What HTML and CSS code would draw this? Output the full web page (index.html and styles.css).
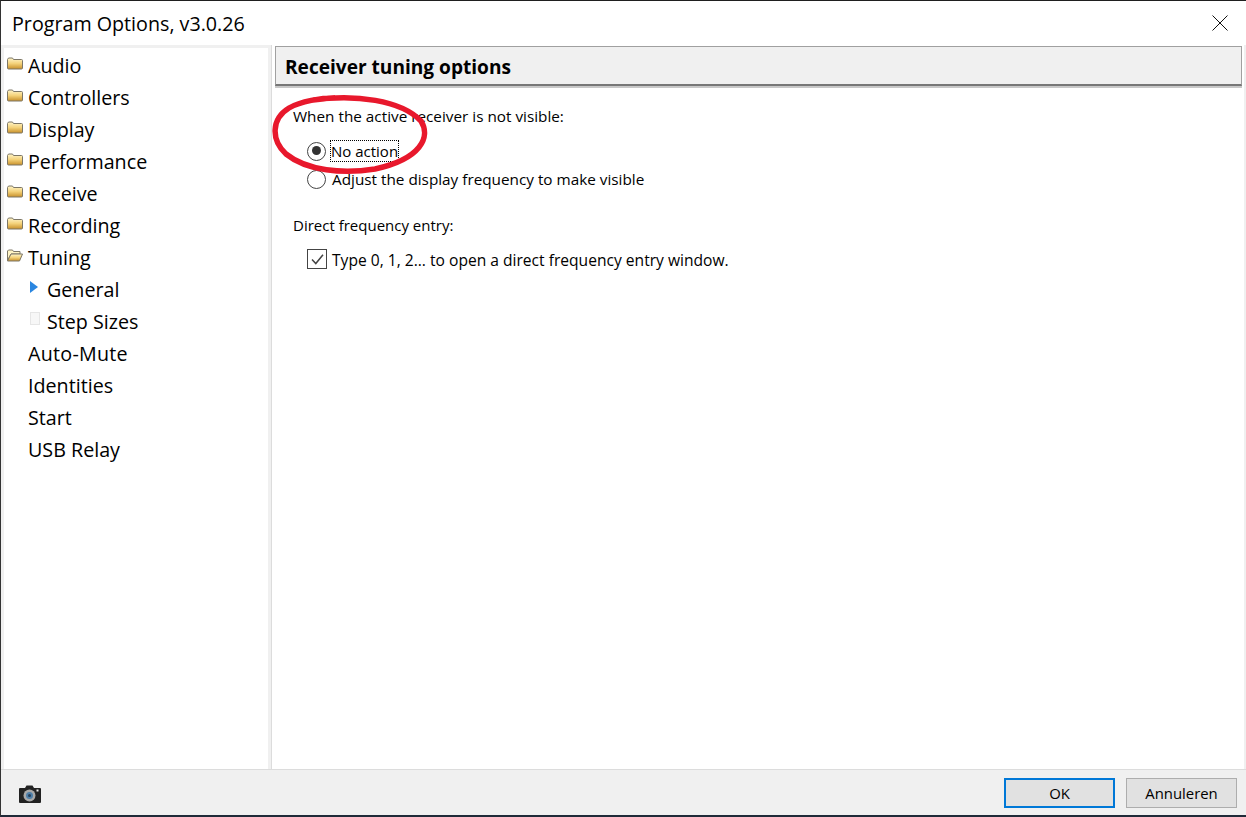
FILE: index.html
```html
<!DOCTYPE html>
<html lang="en">
<head>
<meta charset="utf-8">
<title>Program Options</title>
<link rel="stylesheet" href="styles.css">
</head>
<body>
<svg width="0" height="0" class="defs">
  <defs>
    <linearGradient id="fold" x1="0" y1="0" x2="0" y2="1">
      <stop offset="0" stop-color="#fff6cc"/>
      <stop offset="0.5" stop-color="#f4d27a"/>
      <stop offset="1" stop-color="#c8902a"/>
    </linearGradient>
    <symbol id="folder" viewBox="0 0 16 13">
      <path d="M.5 2.5 L1.5 1 H5.5 L6.5 2.5 H14.5 Q15.5 2.5 15.5 3.5 V11 Q15.5 12 14.5 12 H1.5 Q.5 12 .5 11 Z" fill="url(#fold)" stroke="#7d7766"/>
    </symbol>
  </defs>
</svg>
<div class="window">
  <header class="titlebar">
    <span class="title">Program Options, v3.0.26</span>
    <svg class="close" width="16" height="16" viewBox="0 0 16 16"><path d="M.5.5 15.5 15.5M15.5.5.5 15.5" stroke="#111" fill="none"/></svg>
  </header>
  <div class="main">
    <nav class="tree">
      <div class="node"><svg class="ficon"><use href="#folder"/></svg>Audio</div>
      <div class="node"><svg class="ficon"><use href="#folder"/></svg>Controllers</div>
      <div class="node"><svg class="ficon"><use href="#folder"/></svg>Display</div>
      <div class="node"><svg class="ficon"><use href="#folder"/></svg>Performance</div>
      <div class="node"><svg class="ficon"><use href="#folder"/></svg>Receive</div>
      <div class="node"><svg class="ficon"><use href="#folder"/></svg>Recording</div>
      <div class="node"><svg class="ficon" viewBox="0 0 16 13"><path d="M.5 11.5 V2 L1.5 1 H5.5 L6.5 2.5 H13 V5 H4 L.5 11.5 Z" fill="#fff4c4" stroke="#7d7766"/><path d="M.5 12 L4 5 H15.5 L12.5 12 Z" fill="url(#fold)" stroke="#7d7766"/></svg>Tuning</div>
      <div class="node child"><span class="mark"><svg width="8" height="12" viewBox="0 0 8 12"><path d="M0 0 8 6 0 12Z" fill="#2a86e0"/></svg></span>General</div>
      <div class="node child"><span class="mark"><span class="blank"></span></span>Step Sizes</div>
      <div class="node plain wide">Auto-Mute</div>
      <div class="node plain">Identities</div>
      <div class="node plain">Start</div>
      <div class="node plain">USB Relay</div>
    </nav>
    <section class="pane">
      <h1 class="pane-title">Receiver tuning options</h1>
      <div class="pane-body">
        <p class="label">When the active receiver is not visible:</p>
        <div class="opts">
          <div class="opt first"><span class="radio on"></span><span class="focus">No action</span></div>
          <div class="opt"><span class="radio"></span><span class="txt">Adjust the display frequency to make visible</span></div>
        </div>
        <p class="label second">Direct frequency entry:</p>
        <div class="opt check-row"><span class="check"><svg width="15" height="15" viewBox="0 0 15 15"><path d="M2 7.5 5.8 11.5 13 2.8" fill="none" stroke="#444" stroke-width="1.5"/></svg></span><span class="txt typed">Type 0, 1, 2... to open a direct frequency entry window.</span></div>
      </div>
      <svg class="ring" width="160" height="84" viewBox="0 0 160 84"><path d="M42 7 C84 1 130 7 150 28 C160 44 150 66 104 76 C72 81 36 78 15 61 C0 47 0 26 18 15 C30 8 50 5 64 5" fill="none" stroke="#e8182c" stroke-width="5.5"/></svg>
    </section>
  </div>
  <footer class="footer">
    <svg class="camera" width="24" height="20" viewBox="0 0 24 20">
      <path d="M1 5 Q1 4 2 4 H7 L8.5 1.5 H14.5 L16 4 H22 Q23 4 23 5 V18 Q23 19 22 19 H2 Q1 19 1 18 Z" fill="#222"/>
      <circle cx="11.5" cy="11.5" r="6" fill="#a8a8a8"/>
      <circle cx="11.5" cy="11.5" r="3.5" fill="#4f7fa8"/>
      <circle cx="11.5" cy="11.5" r="1.5" fill="#26405c"/>
      <rect x="18.5" y="5.5" width="2" height="2" fill="#eee"/>
    </svg>
    <div class="buttons">
      <button class="btn default">OK</button>
      <button class="btn">Annuleren</button>
    </div>
  </footer>
</div>
</body>
</html>
```
FILE: styles.css
```css
* { box-sizing: border-box; }
html, body { margin: 0; padding: 0; }
body {
  width: 1246px;
  height: 817px;
  overflow: hidden;
  font-family: "Open Sans", "Noto Sans", sans-serif;
  color: #000;
  background: #fff;
}
.defs { position: absolute; }
.window {
  width: 1246px;
  height: 817px;
  display: flex;
  flex-direction: column;
  border-top: 1px solid #1f1f1f;
  border-left: 1px solid #333;
  border-bottom: 2px solid #1f2a38;
  background: #f0f0f0;
}
.titlebar {
  height: 44px;
  flex: none;
  background: #fff;
  display: flex;
  align-items: center;
  justify-content: space-between;
  padding: 0 18px 0 11px;
}
.title { font-size: 19.7px; }
.close { display: block; margin-top: -1px; }
.main { flex: 1; display: flex; min-height: 0; }
.tree {
  width: 264px;
  margin: 3px 0 0 3px;
  background: #fff;
  padding-top: 1px;
  flex: none;
}
.node {
  height: 32px;
  display: flex;
  align-items: center;
  font-size: 19.7px;
  padding-left: 3px;
}
.wide { letter-spacing: .25px; }
.ficon { width: 16px; height: 13px; margin-right: 5px; margin-top: -3px; flex: none; }
.child { padding-left: 26px; }
.mark { width: 17px; height: 14px; margin-top: -3px; display: block; flex: none; }
.mark svg { display: block; }
.blank { display: block; width: 10px; height: 13px; margin-top: -1px; background: #f7f7f7; border: 1px solid #e6e6e6; }
.plain { padding-left: 24px; }
.pane {
  position: relative;
  flex: 1;
  margin-left: 3px;
  margin-right: 2px;
  background: #fff;
  border-left: 1px solid #dcdcdc;
  padding: 1px 2px 0 3px;
}
.pane-title {
  margin: 0;
  height: 40px;
  background: #f0f0f0;
  border: 1px solid #a0a0a0;
  border-bottom: 2px solid #777;
  box-shadow: 0 2px 0 #c8c8c8;
  font-size: 19.1px;
  font-weight: 700;
  line-height: 41px;
  padding-left: 9px;
}
.pane-body { padding: 19px 0 0 18px; font-size: 15.3px; }
.label { margin: 0; line-height: 22px; height: 22px; }
.opts { margin-top: 10px; }
.opt { display: flex; align-items: center; height: 28px; padding-left: 14px; }
.radio {
  width: 19px;
  height: 19px;
  border-radius: 50%;
  border: 1.5px solid #444;
  background: #fff;
  margin-right: 5px;
  flex: none;
  position: relative;
}
.radio.on::after {
  content: "";
  position: absolute;
  left: 3.5px;
  top: 3.5px;
  width: 9px;
  height: 9px;
  border-radius: 50%;
  background: #333;
}
.focus { border: 1px dotted #000; padding: 0; margin-left: -1px; line-height: 20px; font-size: 15px; }
.txt { margin-left: 1px; }
.typed { font-size: 15.6px; position: relative; top: 1px; }
.second { margin-top: 21px; font-size: 15px; }
.check-row { margin-top: 10px; height: 26px; }
.check {
  width: 20px;
  height: 20px;
  border: 1.5px solid #444;
  background: #fff;
  margin-right: 4px;
  flex: none;
  display: flex;
  align-items: center;
  justify-content: center;
}
.ring { position: absolute; left: -1px; top: 48px; }
.footer {
  height: 46px;
  flex: none;
  border-top: 1px solid #dcdcdc;
  display: flex;
  align-items: center;
  justify-content: space-between;
  padding: 0 9px 0 17px;
}
.camera { display: block; margin-top: 3px; }
.buttons { display: flex; gap: 11px; margin-top: 0; }
.btn {
  width: 111px;
  height: 30px;
  font: 14.9px "Open Sans", "Noto Sans", sans-serif;
  background: #e1e1e1;
  border: 1px solid #adadad;
  color: #000;
  padding: 0;
}
.btn.default { border: 2px solid #0078d7; }
```
